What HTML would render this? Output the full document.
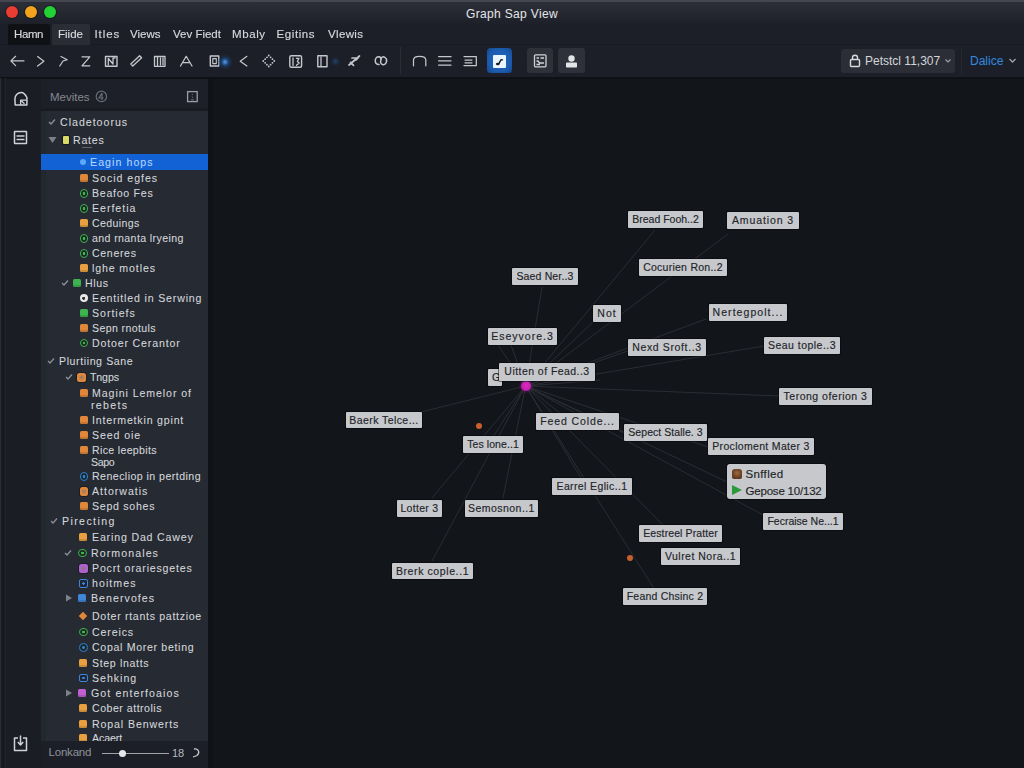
<!DOCTYPE html>
<html><head><meta charset="utf-8">
<style>
*{margin:0;padding:0;box-sizing:border-box}
html,body{width:1024px;height:768px;overflow:hidden;background:#12151a;font-family:"Liberation Sans",sans-serif}
.abs{position:absolute}
#title{position:absolute;left:0;top:0;width:1024px;height:24px;background:linear-gradient(#2b2e36 0px,#2a2d35 4px,#1d2028 22px);border-top:2px solid #44474f}
.tl{position:absolute;top:4px;width:12px;height:12px;border-radius:50%;box-shadow:0 0 0 1px rgba(0,0,0,0.3)}
#ttext{position:absolute;left:0;width:1024px;top:5px;text-align:center;color:#e4e6ea;font-size:12px;line-height:14px;letter-spacing:0.35px}
#menu{position:absolute;left:0;top:24px;width:1024px;height:21px;background:#1c1f27;border-bottom:1px solid #181a21}
.mi{position:absolute;top:-1px;height:22px;line-height:22px;font-size:11.5px;color:#d6d8dc;-webkit-text-stroke-width:0.15px}
#tool{position:absolute;left:0;top:45px;width:1024px;height:32px;background:#1c1f28}
#sep1{position:absolute;left:0;top:77px;width:1024px;height:2px;background:#0f1117}
#rail{position:absolute;left:0;top:79px;width:41px;height:689px;background:#1a1d24}
#side{position:absolute;left:41px;top:79px;width:167px;height:689px;background:#181b21}
#shdr{position:absolute;left:0;top:0;width:167px;height:29px;background:#1d2028}
#tree{position:absolute;left:0;top:32px;width:167px;height:630px;background:#262a33;overflow:hidden}
#sfoot{position:absolute;left:0;top:662px;width:167px;height:27px;background:#1c1f27}
#canvas{position:absolute;left:208px;top:79px;width:816px;height:689px;background:#12151a;border-left:5px solid #0f1217}
.tr{position:absolute;white-space:nowrap;font-size:10.6px;line-height:14px;color:#d4d6da;-webkit-text-stroke-width:0.08px}
.tr.sl{color:#b4d6ff}
.sel{position:absolute;left:0;width:167px;height:16px;background:#1262d6}
.ic{position:absolute}
#lines{position:absolute;left:0;top:0}
#lines line{stroke:#2a2d33;stroke-width:1}
.lb{position:absolute;background:#c6c8cc;color:#222428;-webkit-text-stroke-width:0.15px;box-shadow:0 0 0 1px rgba(5,6,9,0.5);font-size:10.5px;line-height:17px;text-align:center;white-space:nowrap;overflow:hidden;border-radius:1px;letter-spacing:0.3px}
.tbi{position:absolute;top:55px}
#wrap{position:absolute;left:0;top:0;width:1024px;height:768px;overflow:hidden;filter:blur(0.35px)}
</style></head><body><div id="wrap">
<div id="title">
  <div class="tl" style="left:5.8px;background:#ea3c33"></div>
  <div class="tl" style="left:24.8px;background:#f3a41c"></div>
  <div class="tl" style="left:43.5px;background:#22d234"></div>
  <div id="ttext">Graph Sap View</div>
</div>
<div id="menu">
  <div class="abs" style="left:8px;top:0;width:42px;height:21px;background:#0f1115;border-radius:2px"></div>
  <div class="abs" style="left:52px;top:0;width:38px;height:22px;background:#2a2d35;border-radius:2px"></div>
  <div class="mi" style="left:14px;letter-spacing:-0.4px">Hamn</div>
  <div class="mi" style="left:58px">Fiide</div>
  <div class="mi" style="left:94.5px;letter-spacing:0.9px">Itles</div>
  <div class="mi" style="left:130px">Views</div>
  <div class="mi" style="left:173px">Vev Fiedt</div>
  <div class="mi" style="left:232px;letter-spacing:0.6px">Mbaly</div>
  <div class="mi" style="left:276.5px;letter-spacing:0.6px">Egitins</div>
  <div class="mi" style="left:328px;letter-spacing:0.35px">Vlewis</div>
</div>
<div id="tool"></div>
<svg id="tbsvg" class="abs" style="left:0;top:0" width="1024" height="78" fill="none" stroke="#c4c7cc" stroke-width="1.25" stroke-linecap="round" stroke-linejoin="round">
 <path d="M15.6 56.3 L10.9 60.9 L15.6 65.6 M10.9 60.9 L23.9 60.9"/>
 <path d="M37.6 56.6 L43.9 61.2 L37.6 66"/>
 <path d="M61 56.5 L67.2 59.7 L63 61 L59.8 66"/>
 <path d="M82 56.8 L89.8 56.8 L82 65.8 L89.8 65.8"/>
 <rect x="105.5" y="56.5" width="11.5" height="9.8" stroke-width="1.4"/>
 <path d="M108.3 65 L108.3 58.5 L113 64 L113 58 L115 58" stroke-width="1.3"/>
 <path d="M130.8 64 L139.6 55.8 L141.6 57.8 L132.8 66 Z" stroke-width="1.3"/>
 <rect x="154.5" y="56.5" width="10.5" height="9.8" stroke-width="1.3"/>
 <path d="M157.5 57 L157.5 66 M160.5 58 L160.5 65 M163 58 L163 65" stroke-width="1.3"/>
 <path d="M180.5 66 L186.2 56.3 L192 66 M182.8 62.5 L189.5 62.5"/>
 <rect x="210.3" y="56" width="8.5" height="10" stroke-width="1.4"/>
 <rect x="212.8" y="58.6" width="3.5" height="5" stroke-width="1.1"/>
 <path d="M246.9 56.3 L240.2 61.2 L246.9 66"/>
 <circle cx="268.80" cy="55.50" r="0.9" fill="#c4c7cc" stroke="none"/><circle cx="270.63" cy="57.33" r="0.9" fill="#c4c7cc" stroke="none"/><circle cx="272.47" cy="59.17" r="0.9" fill="#c4c7cc" stroke="none"/><circle cx="274.30" cy="61.00" r="0.9" fill="#c4c7cc" stroke="none"/><circle cx="272.47" cy="62.83" r="0.9" fill="#c4c7cc" stroke="none"/><circle cx="270.63" cy="64.67" r="0.9" fill="#c4c7cc" stroke="none"/><circle cx="268.80" cy="66.50" r="0.9" fill="#c4c7cc" stroke="none"/><circle cx="266.97" cy="64.67" r="0.9" fill="#c4c7cc" stroke="none"/><circle cx="265.13" cy="62.83" r="0.9" fill="#c4c7cc" stroke="none"/><circle cx="263.30" cy="61.00" r="0.9" fill="#c4c7cc" stroke="none"/><circle cx="265.13" cy="59.17" r="0.9" fill="#c4c7cc" stroke="none"/><circle cx="266.97" cy="57.33" r="0.9" fill="#c4c7cc" stroke="none"/>
 <rect x="289.8" y="55.8" width="11.8" height="11.5" rx="1.5" stroke-width="1.4"/>
 <path d="M293 58 L293 65.5 M296.5 58.3 L299 58.3 L297.4 61.4 L299.2 63 L296.5 65.3" stroke-width="1.3"/>
 <rect x="317.8" y="55.8" width="9.2" height="11" stroke-width="1.4"/>
 <path d="M321 57 L321 65.8" stroke-width="1.3"/>
 <path d="M349 65 L359.5 56 M350.5 62.3 L353.5 65.3 M352 58 L358 58 L356 60" stroke-width="1.7"/>
 <path d="M379 64.5 C374 64.5 374 56.5 379 56.8 C381 57 381 59 381 60 C381 57 383 56 385 57.5 C388 59.5 386.5 65.5 382.5 64.5 C380 63.8 380.5 61 381 60" stroke-width="1.5"/>
 <path d="M413.5 65.8 L413.5 60 C413.5 55 425.8 55 425.8 60 L425.8 65.8"/>
 <path d="M438.6 56.7 L451 56.7 M438.6 60.8 L451 60.8 M438.6 65 L451 65"/>
 <path d="M464 56.6 L476.3 56.6 L476.3 65.6 L464 65.6 M465 60 L472 60 M465 62.8 L472 62.8"/>
</svg>
<div class="abs" style="left:400px;top:47px;width:1px;height:27px;background:#2a2d34"></div>
<div class="abs" style="left:217.4px;top:53.7px;width:16px;height:16px;border-radius:50%;background:radial-gradient(circle,#5c9ee8 0,#3a74b8 1.6px,#1d4675 3.2px,rgba(24,56,96,0.55) 5px,rgba(24,56,96,0) 8px)"></div>
<div class="abs" style="left:331px;top:57px;width:9px;height:9px;border-radius:50%;background:radial-gradient(circle,#1f4468 0,rgba(30,60,100,0.45) 40%,rgba(30,60,100,0) 75%)"></div>
<div class="abs" style="left:487px;top:48px;width:25px;height:25px;border-radius:3.5px;background:radial-gradient(circle,#2068c0 0,#1c5cb0 60%,#15488c 100%)"></div>
<div class="abs" style="left:493.3px;top:54.8px;width:13px;height:13px;border-radius:1px;background:#eaf4fc"></div>
<svg class="abs" style="left:493.3px;top:54.8px" width="13" height="13"><ellipse cx="4.8" cy="9" rx="1.9" ry="1.3" fill="#1a1c20"/><path d="M6 8.6 L7.5 5.5 C8 4.6 9 4.4 9.8 5.2" stroke="#1a1c20" stroke-width="1.5" fill="none"/></svg>
<div class="abs" style="left:527px;top:48px;width:26px;height:25px;border-radius:3px;background:#2e3139"></div>
<svg class="abs" style="left:527px;top:48px" width="26" height="25" fill="none" stroke="#d0d2d6" stroke-width="1.3"><rect x="7.5" y="6.8" width="11.5" height="12" rx="1"/><path d="M9.5 10 L12 10 M13.5 10 L17 10 M9.5 13 L11 13 L12.5 15 L17 15 M9.5 16.5 L13 16.5"/></svg>
<div class="abs" style="left:558px;top:48px;width:27px;height:25px;border-radius:3px;background:#2e3139"></div>
<svg class="abs" style="left:558px;top:48px" width="27" height="25"><circle cx="13.5" cy="10.5" r="3.2" fill="#e2e4e8"/><rect x="8" y="14.5" width="11" height="5" rx="0.8" fill="#e2e4e8"/></svg>
<div class="abs" style="left:841px;top:49px;width:114px;height:24px;border-radius:3px;background:#2b2e36"></div>
<svg class="abs" style="left:849px;top:53px" width="13" height="15" fill="none" stroke="#d8dadc" stroke-width="1.4"><rect x="1.5" y="6.5" width="9" height="7" rx="1"/><path d="M3.5 6.5 L3.5 4.5 C3.5 1.5 8.5 1.5 8.5 4.5 L8.5 6.5"/></svg>
<div class="abs" style="left:865px;top:54px;font-size:12px;line-height:14px;color:#d4d6da;white-space:nowrap">Petstcl 11,307</div>
<svg class="abs" style="left:944px;top:58px" width="8" height="6" fill="none" stroke="#9a9da3" stroke-width="1.2"><path d="M1.5 1.5 L4 4 L6.5 1.5"/></svg>
<div class="abs" style="left:961px;top:49px;width:1px;height:25px;background:#25282f"></div>
<div class="abs" style="left:970px;top:54px;font-size:12px;line-height:14px;color:#3f84cf;white-space:nowrap;text-shadow:0 0 2px #0b2f5a">Dalice</div>
<svg class="abs" style="left:1008px;top:58px" width="9" height="6" fill="none" stroke="#a0a3a9" stroke-width="1.3"><path d="M1.5 1 L4.5 4 L7.5 1"/></svg>
<div id="sep1"></div>
<div id="rail">
  <svg class="abs" style="left:0;top:-1px" width="41" height="690" fill="none" stroke="#d0d2d6" stroke-width="1.5" stroke-linejoin="round">
    <path d="M15.2 105 L14.9 99 C14.9 95 18 92.4 21.2 92.4 C23.5 92.4 25.5 94.5 26.9 97.5 L26.9 105 Z" transform="translate(0,-78)"/>
    <path d="M20.6 105 L20.6 100.2 L26.5 100.2 M21.5 101 L24.5 103.8" transform="translate(0,-78)" stroke-width="1.3"/>
    <rect x="14.5" y="53.5" width="12" height="12" rx="0.5"/>
    <path d="M16.5 58 L24.5 58 M16.5 61.5 L24.5 61.5" stroke-width="1.4"/>
    <path d="M18 660 L14.5 660 L14.5 672.5 L26.5 672.5 L26.5 660 L23 660" stroke-width="1.5"/>
    <path d="M20.5 657.5 L20.5 667 M17.8 664 L20.5 667 L23.2 664" stroke-width="1.5"/>
  </svg>
</div>
<div id="side">
  <div id="shdr">
    <div class="abs" style="left:9px;top:11px;font-size:11.5px;color:#858890;line-height:14px">Mevites</div>
    <svg class="abs" style="left:54px;top:11px" width="14" height="14" fill="none" stroke="#686c74" stroke-width="1.2"><circle cx="6.4" cy="6.4" r="5.2"/><path d="M7 3 L4 8 L8.5 8 M7 3 L7 10"/></svg>
    <svg class="abs" style="left:145px;top:11px" width="13" height="14" fill="none" stroke="#9a9da4" stroke-width="1.3"><rect x="1.6" y="1.6" width="9.6" height="10"/><path d="M6.3 4 L6.3 5 M6 6.5 L7 8 M5 9.8 L8 9.8" stroke="#70737a" stroke-width="1"/></svg>
  </div>
  <div id="tree">
<div class="abs" style="left:41px;top:36px;width:10px;height:1px;background:#60646c"></div>
<div class="abs" style="left:0;top:0;width:5px;height:630px;background:#23272f"></div>
<svg class="ic" style="left:7px;top:7px" width="8" height="8" viewBox="0 0 8 8"><path d="M1 4 L3 6 L7 1.5" stroke="#8b8f97" stroke-width="1.3" fill="none"/></svg>
<div class="tr" style="left:19.0px;top:4px;letter-spacing:1.000px">Cladetoorus</div>
<svg class="ic" style="left:7px;top:25px" width="9" height="8" viewBox="0 0 9 8"><path d="M0.5 1 L8.5 1 L4.5 7 Z" fill="#7d8189"/></svg>
<div class="ic" style="left:21.700000000000003px;top:25px;width:6.5px;height:7.5px;background:#dcda66;border-radius:1px;box-shadow:0 0 1px 1px rgba(10,10,0,0.5)"></div>
<div class="tr" style="left:32.0px;top:22px;letter-spacing:0.750px">Rates</div>
<div class="sel" style="top:43px"></div>
<div class="ic" style="left:39px;top:47.5px;width:6px;height:6px;background:#5aa8ff;border-radius:50%"></div>
<div class="tr sl" style="left:49.0px;top:43.5px;letter-spacing:1.067px">Eagin hops</div>
<div class="ic" style="left:38.5px;top:63px;width:8px;height:8px;background:#e0873a;border-radius:1.5px;box-shadow:inset 0 -2px 0 rgba(0,0,0,0.12)"></div>
<div class="tr" style="left:51.0px;top:60px;letter-spacing:0.980px">Socid egfes</div>
<div class="ic" style="left:38.5px;top:78px;width:8.5px;height:8.5px;border:1.6px solid #3fb34f;background:radial-gradient(circle,#3fb34f 0 1.2px,rgba(20,40,25,0.6) 1.6px);border-radius:50%"></div>
<div class="tr" style="left:51.0px;top:75px;letter-spacing:0.722px">Beafoo Fes</div>
<div class="ic" style="left:38.5px;top:93px;width:8.5px;height:8.5px;border:1.6px solid #3fb34f;background:radial-gradient(circle,#3fb34f 0 1.2px,rgba(20,40,25,0.6) 1.6px);border-radius:50%"></div>
<div class="tr" style="left:51.0px;top:90px;letter-spacing:0.986px">Eerfetia</div>
<div class="ic" style="left:38.5px;top:107.5px;width:8px;height:8px;background:#e8a040;border-radius:1.5px;box-shadow:inset 0 -2px 0 rgba(0,0,0,0.12)"></div>
<div class="tr" style="left:51.0px;top:104.5px;letter-spacing:0.357px">Ceduings</div>
<div class="ic" style="left:38.5px;top:123px;width:8.5px;height:8.5px;border:1.6px solid #3fb34f;background:radial-gradient(circle,#3fb34f 0 1.2px,rgba(20,40,25,0.6) 1.6px);border-radius:50%"></div>
<div class="tr" style="left:51.0px;top:120px;letter-spacing:0.382px">and rnanta lryeing</div>
<div class="ic" style="left:38.5px;top:138px;width:8.5px;height:8.5px;border:1.6px solid #3fb34f;background:radial-gradient(circle,#3fb34f 0 1.2px,rgba(20,40,25,0.6) 1.6px);border-radius:50%"></div>
<div class="tr" style="left:51.0px;top:135px;letter-spacing:0.650px">Ceneres</div>
<div class="ic" style="left:38.5px;top:153px;width:8px;height:8px;background:#e8a040;border-radius:1.5px;box-shadow:inset 0 -2px 0 rgba(0,0,0,0.12)"></div>
<div class="tr" style="left:51.0px;top:150px;letter-spacing:0.880px">lghe motles</div>
<svg class="ic" style="left:20px;top:168px" width="8" height="8" viewBox="0 0 8 8"><path d="M1 4 L3 6 L7 1.5" stroke="#8b8f97" stroke-width="1.3" fill="none"/></svg>
<div class="ic" style="left:32px;top:168px;width:8px;height:8px;background:#3fb34f;border-radius:1.5px;box-shadow:inset 0 -2px 0 rgba(0,0,0,0.12)"></div>
<div class="tr" style="left:44.0px;top:165px;letter-spacing:0.600px">Hlus</div>
<div class="ic" style="left:38.5px;top:183px;width:8px;height:8px;background:radial-gradient(circle at 45% 55%,#333 0 1.3px,#e8e8e8 1.6px);border-radius:50%"></div>
<div class="tr" style="left:51.0px;top:180px;letter-spacing:0.832px">Eentitled in Serwing</div>
<div class="ic" style="left:38.5px;top:198px;width:8px;height:8px;background:#3fb34f;border-radius:1.5px;box-shadow:inset 0 -2px 0 rgba(0,0,0,0.12)"></div>
<div class="tr" style="left:51.0px;top:195px;letter-spacing:0.986px">Sortiefs</div>
<div class="ic" style="left:38.5px;top:213px;width:8px;height:8px;background:#e0873a;border-radius:1.5px;box-shadow:inset 0 -2px 0 rgba(0,0,0,0.12)"></div>
<div class="tr" style="left:51.0px;top:210px;letter-spacing:0.373px">Sepn rnotuls</div>
<div class="ic" style="left:38.5px;top:227.5px;width:8.5px;height:8.5px;border:1.6px solid #3fb34f;background:radial-gradient(circle,#3fb34f 0 1.2px,rgba(20,40,25,0.6) 1.6px);border-radius:50%"></div>
<div class="tr" style="left:51.0px;top:224.5px;letter-spacing:0.836px">Dotoer Cerantor</div>
<svg class="ic" style="left:6px;top:246px" width="8" height="8" viewBox="0 0 8 8"><path d="M1 4 L3 6 L7 1.5" stroke="#8b8f97" stroke-width="1.3" fill="none"/></svg>
<div class="tr" style="left:18.0px;top:243px;letter-spacing:0.592px">Plurtiing Sane</div>
<svg class="ic" style="left:24px;top:262px" width="8" height="8" viewBox="0 0 8 8"><path d="M1 4 L3 6 L7 1.5" stroke="#8b8f97" stroke-width="1.3" fill="none"/></svg>
<div class="ic" style="left:36px;top:262px;width:8.5px;height:8.5px;background:radial-gradient(circle,rgba(255,220,190,0.45) 0,#e0873a 3px);border-radius:2.5px;box-shadow:0 0 0 1px rgba(0,0,0,0.3)"></div>
<div class="tr" style="left:49.0px;top:259px;letter-spacing:-0.125px">Tngps</div>
<div class="ic" style="left:38.5px;top:277.5px;width:8px;height:8px;background:#e0873a;border-radius:1.5px;box-shadow:inset 0 -2px 0 rgba(0,0,0,0.12)"></div>
<div class="tr" style="left:51.0px;top:274.5px;letter-spacing:0.925px">Magini Lemelor of</div>
<div class="tr" style="left:50.0px;top:287px;letter-spacing:1.300px">rebets</div>
<div class="ic" style="left:38.5px;top:304.5px;width:8px;height:8px;background:#e0873a;border-radius:1.5px;box-shadow:inset 0 -2px 0 rgba(0,0,0,0.12)"></div>
<div class="tr" style="left:51.0px;top:301.5px;letter-spacing:0.812px">Intermetkin gpint</div>
<div class="ic" style="left:38.5px;top:320px;width:8px;height:8px;background:#e0873a;border-radius:1.5px;box-shadow:inset 0 -2px 0 rgba(0,0,0,0.12)"></div>
<div class="tr" style="left:51.0px;top:317px;letter-spacing:0.900px">Seed oie</div>
<div class="ic" style="left:38.5px;top:335px;width:8px;height:8px;background:#e0873a;border-radius:1.5px;box-shadow:inset 0 -2px 0 rgba(0,0,0,0.12)"></div>
<div class="tr" style="left:51.0px;top:332px;letter-spacing:0.325px">Rice leepbits</div>
<div class="tr" style="left:50.0px;top:344px;letter-spacing:-0.333px">Sapo</div>
<div class="ic" style="left:38.5px;top:361px;width:8.5px;height:8.5px;border:1.6px solid #2f7fd6;background:radial-gradient(circle,#2f7fd6 0 1.2px,rgba(20,40,25,0.6) 1.6px);border-radius:50%"></div>
<div class="tr" style="left:51.0px;top:358px;letter-spacing:0.450px">Renecliop in pertding</div>
<div class="ic" style="left:38.5px;top:376px;width:8.5px;height:8.5px;background:radial-gradient(circle,rgba(255,220,190,0.45) 0,#e0873a 3px);border-radius:2.5px;box-shadow:0 0 0 1px rgba(0,0,0,0.3)"></div>
<div class="tr" style="left:51.0px;top:373px;letter-spacing:0.978px">Attorwatis</div>
<div class="ic" style="left:38.5px;top:391px;width:8px;height:8px;background:#e0873a;border-radius:1.5px;box-shadow:inset 0 -2px 0 rgba(0,0,0,0.12)"></div>
<div class="tr" style="left:51.0px;top:388px;letter-spacing:0.722px">Sepd sohes</div>
<svg class="ic" style="left:9px;top:406px" width="8" height="8" viewBox="0 0 8 8"><path d="M1 4 L3 6 L7 1.5" stroke="#8b8f97" stroke-width="1.3" fill="none"/></svg>
<div class="tr" style="left:21.0px;top:403px;letter-spacing:1.387px">Pirecting</div>
<div class="ic" style="left:38px;top:422px;width:8px;height:8px;background:#e8a040;border-radius:1.5px;box-shadow:inset 0 -2px 0 rgba(0,0,0,0.12)"></div>
<div class="tr" style="left:51.0px;top:419px;letter-spacing:0.833px">Earing Dad Cawey</div>
<svg class="ic" style="left:23px;top:437.5px" width="8" height="8" viewBox="0 0 8 8"><path d="M1 4 L3 6 L7 1.5" stroke="#8b8f97" stroke-width="1.3" fill="none"/></svg>
<div class="ic" style="left:37px;top:437.5px;width:8.5px;height:8.5px;border:1.6px solid #3fb34f;background:radial-gradient(circle,#3fb34f 0 1.2px,rgba(20,40,25,0.6) 1.6px);border-radius:50%"></div>
<div class="tr" style="left:50.0px;top:434.5px;letter-spacing:1.089px">Rormonales</div>
<div class="ic" style="left:38px;top:453px;width:8.5px;height:8.5px;background:radial-gradient(circle,rgba(255,220,190,0.45) 0,#b060d0 3px);border-radius:2.5px;box-shadow:0 0 0 1px rgba(0,0,0,0.3)"></div>
<div class="tr" style="left:51.0px;top:450px;letter-spacing:0.812px">Pocrt orariesgetes</div>
<div class="ic" style="left:38px;top:468px;width:8.5px;height:8.5px;border:1.3px solid #3f86d8;border-radius:2px;background:radial-gradient(circle,#3f86d8 0 1px,rgba(20,35,60,0.5) 1.5px)"></div>
<div class="tr" style="left:51.0px;top:465px;letter-spacing:1.067px">hoitmes</div>
<svg class="ic" style="left:24px;top:483px" width="8" height="8" viewBox="0 0 8 8"><path d="M1 0.5 L7 4 L1 7.5 Z" fill="#7d8189"/></svg>
<div class="ic" style="left:37px;top:483px;width:8px;height:8px;background:#3f86d8;border-radius:1.5px;box-shadow:inset 0 -2px 0 rgba(0,0,0,0.12)"></div>
<div class="tr" style="left:50.0px;top:480px;letter-spacing:1.056px">Benervofes</div>
<div class="ic" style="left:39px;top:502px;width:6px;height:6px;background:#e0873a;transform:rotate(45deg)"></div>
<div class="tr" style="left:51.0px;top:498px;letter-spacing:0.690px">Doter rtants pattzioe</div>
<div class="ic" style="left:38px;top:516.5px;width:8.5px;height:8.5px;border:1.6px solid #3fb34f;background:radial-gradient(circle,#3fb34f 0 1.2px,rgba(20,40,25,0.6) 1.6px);border-radius:50%"></div>
<div class="tr" style="left:51.0px;top:513.5px;letter-spacing:0.867px">Cereics</div>
<div class="ic" style="left:38px;top:532px;width:8.5px;height:8.5px;border:1.6px solid #2f7fd6;background:radial-gradient(circle,#2f7fd6 0 1.2px,rgba(20,40,25,0.6) 1.6px);border-radius:50%"></div>
<div class="tr" style="left:51.0px;top:529px;letter-spacing:0.676px">Copal Morer beting</div>
<div class="ic" style="left:38px;top:547.5px;width:8px;height:8px;background:#e8a040;border-radius:1.5px;box-shadow:inset 0 -2px 0 rgba(0,0,0,0.12)"></div>
<div class="tr" style="left:51.0px;top:544.5px;letter-spacing:0.650px">Step lnatts</div>
<div class="ic" style="left:38px;top:562.5px;width:8.5px;height:8.5px;border:1.3px solid #3f86d8;border-radius:2px;background:radial-gradient(circle,#3f86d8 0 1px,rgba(20,35,60,0.5) 1.5px)"></div>
<div class="tr" style="left:51.0px;top:559.5px;letter-spacing:0.983px">Sehking</div>
<svg class="ic" style="left:24px;top:577.5px" width="8" height="8" viewBox="0 0 8 8"><path d="M1 0.5 L7 4 L1 7.5 Z" fill="#7d8189"/></svg>
<div class="ic" style="left:37px;top:577.5px;width:8px;height:8px;background:#c060d0;border-radius:1.5px;box-shadow:inset 0 -2px 0 rgba(0,0,0,0.12)"></div>
<div class="tr" style="left:50.0px;top:574.5px;letter-spacing:1.100px">Got enterfoaios</div>
<div class="ic" style="left:38px;top:593px;width:8px;height:8px;background:#e8a040;border-radius:1.5px;box-shadow:inset 0 -2px 0 rgba(0,0,0,0.12)"></div>
<div class="tr" style="left:51.0px;top:590px;letter-spacing:0.500px">Cober attrolis</div>
<div class="ic" style="left:38px;top:608.5px;width:8px;height:8px;background:#e8a040;border-radius:1.5px;box-shadow:inset 0 -2px 0 rgba(0,0,0,0.12)"></div>
<div class="tr" style="left:51.0px;top:605.5px;letter-spacing:0.885px">Ropal Benwerts</div>
<div class="ic" style="left:38px;top:623px;width:8px;height:8px;background:#e8a040;border-radius:1.5px;box-shadow:inset 0 -2px 0 rgba(0,0,0,0.12)"></div>
<div class="tr" style="left:51.0px;top:620px;letter-spacing:-0.100px">Acaert</div>
  </div>
  <div id="sfoot">
    <div class="abs" style="left:7.5px;top:3.5px;font-size:11.5px;color:#8e9198;line-height:14px;letter-spacing:-0.2px">Lonkand</div>
    <div class="abs" style="left:61px;top:11.5px;width:67px;height:1.5px;background:#a0a3a8"></div>
    <div class="abs" style="left:77.5px;top:8.5px;width:7.5px;height:7.5px;border-radius:50%;background:#e6e8ea"></div>
    <div class="abs" style="left:131px;top:5px;font-size:11px;color:#b8bbc0;line-height:14px">18</div>
    <svg class="abs" style="left:150px;top:6px" width="10" height="12" fill="none" stroke="#c4c7cc" stroke-width="1.3"><path d="M3 2 C8 1 9 6 6 8.5 L2 10"/></svg>
  </div>
</div>
<div id="canvas"></div>
<div class="abs" style="left:0;top:78px;width:1px;height:690px;background:#2a2d35"></div>
<div class="abs" style="left:2px;top:78px;width:2px;height:690px;background:#16181e"></div>
<div class="abs" style="left:5px;top:78px;width:1px;height:690px;background:#20232b"></div>
<svg id="lines" width="1024" height="768">
<line x1="525.6" y1="386" x2="655" y2="230"/>
<line x1="525.6" y1="386" x2="728" y2="234"/>
<line x1="525.6" y1="386" x2="542" y2="287"/>
<line x1="525.6" y1="386" x2="594" y2="321"/>
<line x1="525.6" y1="386" x2="706" y2="319"/>
<line x1="525.6" y1="386" x2="628" y2="351"/>
<line x1="525.6" y1="386" x2="764" y2="346"/>
<line x1="525.6" y1="386" x2="779" y2="396"/>
<line x1="525.6" y1="386" x2="511" y2="345"/>
<line x1="525.6" y1="386" x2="498" y2="345"/>
<line x1="525.6" y1="386" x2="421" y2="412"/>
<line x1="525.6" y1="386" x2="432" y2="498"/>
<line x1="525.6" y1="386" x2="432" y2="561"/>
<line x1="525.6" y1="386" x2="503" y2="498"/>
<line x1="525.6" y1="386" x2="493" y2="437"/>
<line x1="525.6" y1="386" x2="581" y2="478"/>
<line x1="525.6" y1="386" x2="655" y2="590"/>
<line x1="525.6" y1="386" x2="624" y2="432"/>
<line x1="525.6" y1="386" x2="708" y2="447"/>
<line x1="525.6" y1="386" x2="727" y2="482"/>
<line x1="525.6" y1="386" x2="763" y2="515"/>
<line x1="525.6" y1="386" x2="560" y2="413"/>
<line x1="525.6" y1="386" x2="663" y2="525"/>
<line x1="525.6" y1="386" x2="600" y2="380"/>
</svg>
<div class="abs" style="left:520.5px;top:380.8px;width:10.5px;height:10.5px;border-radius:45%;background:radial-gradient(circle at 55% 45%,#e02ac0 0,#c020b0 60%,#901890 100%);box-shadow:0 0 3px 1px rgba(150,20,140,0.5)"></div>
<div class="abs" style="left:476px;top:423px;width:6px;height:6px;border-radius:50%;background:#c8602c"></div>
<div class="abs" style="left:627px;top:555px;width:6px;height:6px;border-radius:50%;background:#c8602c"></div>
<div class="lb" style="left:488px;top:368.5px;width:14px;height:17px;text-align:left;padding-left:4px">G</div>
<div class="lb" style="left:628px;top:211px;width:75px;height:17px;letter-spacing:0.0px">Bread Fooh..2</div>
<div class="lb" style="left:727px;top:212px;width:72px;height:17px;letter-spacing:0.9px">Amuation 3</div>
<div class="lb" style="left:512px;top:268px;width:66px;height:17px;letter-spacing:0.15px">Saed Ner..3</div>
<div class="lb" style="left:639px;top:259px;width:88px;height:17px;letter-spacing:0.25px">Cocurien Ron..2</div>
<div class="lb" style="left:593px;top:305px;width:28px;height:17px;letter-spacing:1.05px">Not</div>
<div class="lb" style="left:709px;top:304px;width:78px;height:17px;letter-spacing:1.05px">Nertegpolt...</div>
<div class="lb" style="left:488px;top:328px;width:69px;height:17px;letter-spacing:1.0px">Eseyvore.3</div>
<div class="lb" style="left:628px;top:339px;width:78px;height:17px;letter-spacing:0.62px">Nexd Sroft..3</div>
<div class="lb" style="left:764px;top:337px;width:76px;height:17px;letter-spacing:0.47px">Seau tople..3</div>
<div class="lb" style="left:779px;top:388px;width:93px;height:17px;letter-spacing:0.5px">Terong oferion 3</div>
<div class="lb" style="left:346px;top:412px;width:76px;height:16px;letter-spacing:0.42px">Baerk Telce...</div>
<div class="lb" style="left:536px;top:413px;width:83px;height:17px;letter-spacing:0.9px">Feed Colde...</div>
<div class="lb" style="left:624px;top:424px;width:83px;height:17px;letter-spacing:0.05px">Sepect Stalle. 3</div>
<div class="lb" style="left:708px;top:438px;width:106px;height:17px;letter-spacing:0.32px">Procloment Mater 3</div>
<div class="lb" style="left:463px;top:436px;width:60px;height:17px;letter-spacing:0.08px">Tes lone..1</div>
<div class="lb" style="left:552px;top:478px;width:80px;height:17px;letter-spacing:0.37px">Earrel Eglic..1</div>
<div class="lb" style="left:397px;top:500px;width:45px;height:17px;letter-spacing:0.3px">Lotter 3</div>
<div class="lb" style="left:465px;top:500px;width:73px;height:17px;letter-spacing:0.45px">Semosnon..1</div>
<div class="lb" style="left:763px;top:513px;width:80px;height:17px;letter-spacing:0.0px">Fecraise Ne...1</div>
<div class="lb" style="left:639px;top:525px;width:83px;height:17px;letter-spacing:0.1px">Eestreel Pratter</div>
<div class="lb" style="left:661px;top:548px;width:79px;height:17px;letter-spacing:0.49px">Vulret Nora..1</div>
<div class="lb" style="left:392px;top:563px;width:81px;height:16px;letter-spacing:0.6px">Brerk cople..1</div>
<div class="lb" style="left:623px;top:588px;width:84px;height:17px;letter-spacing:0.21px">Feand Chsinc 2</div>
<div class="lb" style="left:499px;top:363px;width:96px;height:17.5px;letter-spacing:0.45px">Uitten of Fead..3</div>
<div class="abs" style="left:727px;top:464px;width:99px;height:35px;background:#c6c8cc;border-radius:3px;box-shadow:0 0 0 1px rgba(5,6,9,0.5)"></div>
<div class="abs" style="left:732.3px;top:468.8px;width:9.8px;height:9.8px;background:radial-gradient(circle at 50% 40%,#9a6a40 0,#6a4024 60%,#4a2c18 100%);border-radius:3px 3px 2px 2px"></div>
<svg class="abs" style="left:732px;top:485px" width="10" height="10"><path d="M0 0 L10 5 L0 10 Z" fill="#2a9a3a"/></svg>
<div class="abs" style="left:745.5px;top:466.5px;font-size:11.5px;line-height:14px;color:#222428;letter-spacing:0.35px;-webkit-text-stroke-width:0.15px">Snffled</div>
<div class="abs" style="left:745.5px;top:483.5px;font-size:11.5px;line-height:14px;color:#222428;letter-spacing:-0.2px;-webkit-text-stroke-width:0.15px">Gepose 10/132</div>
</div></body></html>
